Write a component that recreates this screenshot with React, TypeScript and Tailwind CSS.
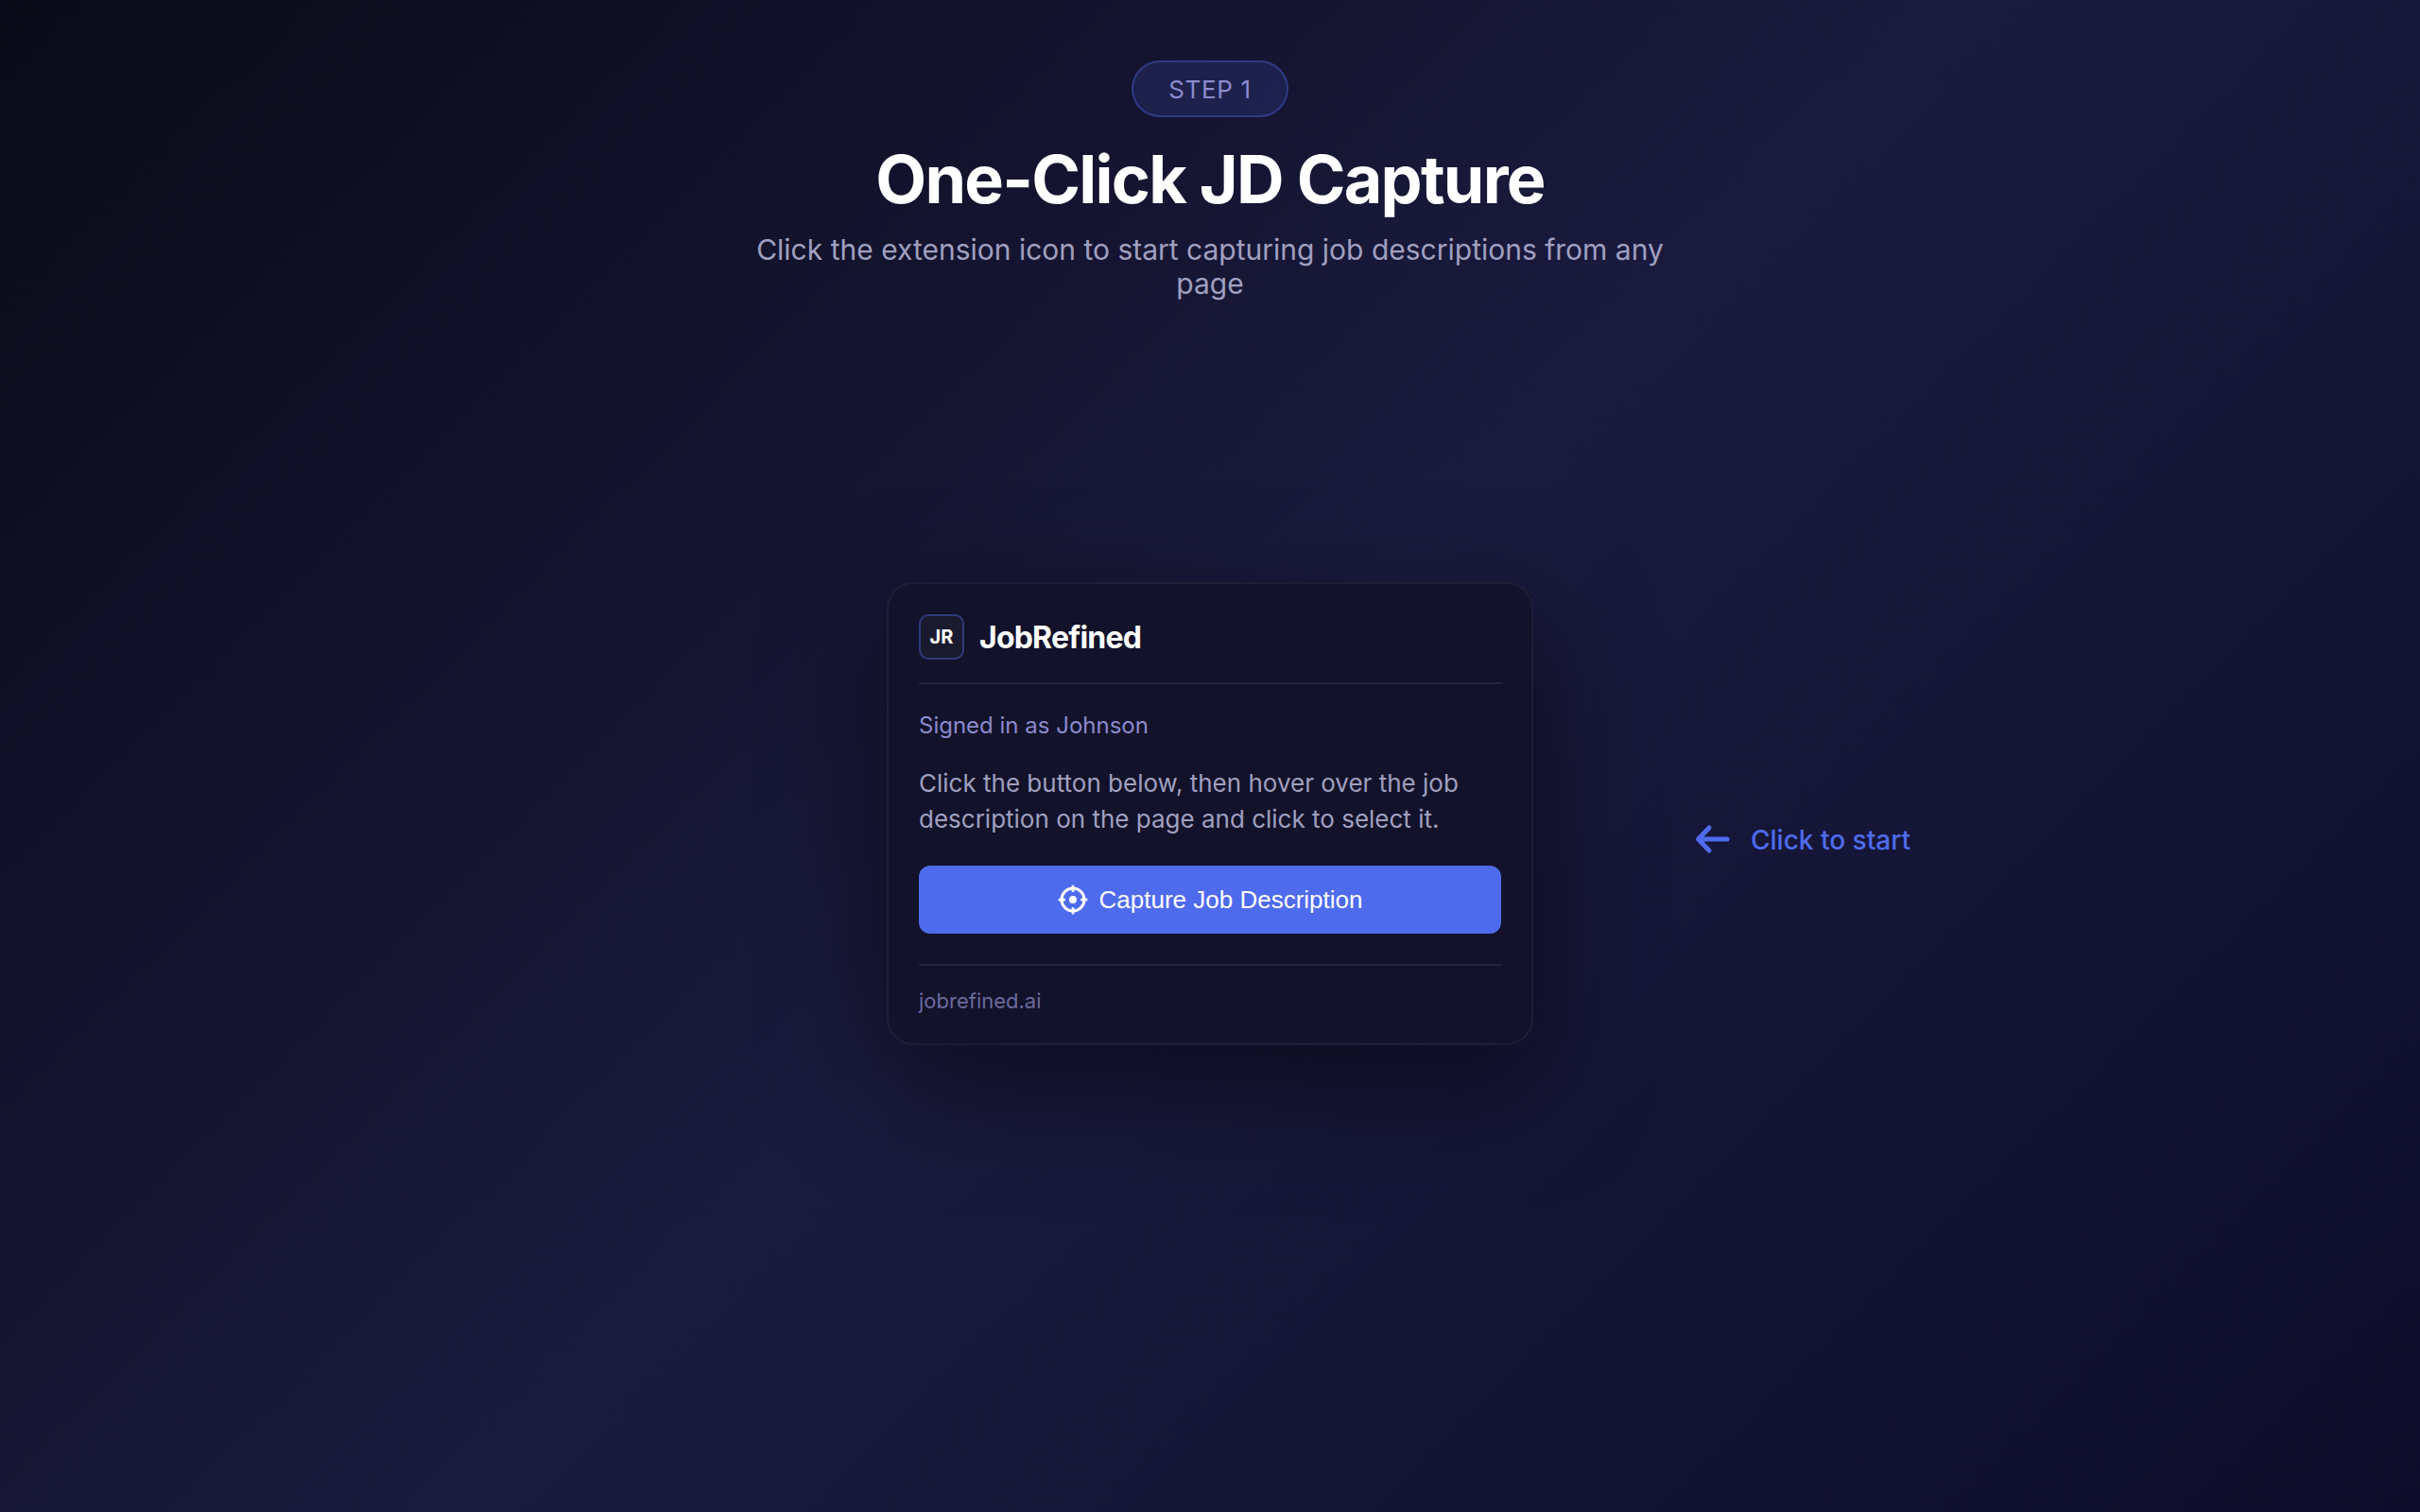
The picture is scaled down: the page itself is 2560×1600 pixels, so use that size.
function TargetIcon() {
  return (
    <svg
      className="size-8"
      viewBox="0 0 32 32"
      fill="none"
      stroke="currentColor"
      strokeWidth="3"
      strokeLinecap="round"
      aria-hidden="true"
    >
      <circle cx="16" cy="16" r="12" />
      <circle cx="16" cy="16" r="4" fill="currentColor" stroke="none" />
      <path d="M16 2v4.5M16 25.5V30M2 16h4.5M25.5 16H30" />
    </svg>
  );
}

function ArrowIcon() {
  return (
    <svg
      className="size-12"
      viewBox="0 0 48 48"
      fill="none"
      stroke="currentColor"
      strokeWidth="5"
      strokeLinecap="round"
      strokeLinejoin="round"
      aria-hidden="true"
    >
      <path d="M39 23H9M20 11L8.5 23L20 35" />
    </svg>
  );
}

function PopupCard() {
  return (
    <section className="w-[684px] rounded-[28px] border-2 border-white/5 bg-[#12122a] p-8 shadow-[0_40px_120px_rgba(0,0,0,0.5)]">
      <div className="flex items-center gap-4 border-b-2 border-white/8 pb-6">
        <div className="flex size-12 items-center justify-center rounded-[10px] border-2 border-[#4f6bed]/40 bg-[#1a1a2e] text-xl font-bold text-white">
          JR
        </div>
        <h2 className="pt-0.5 text-[32px] leading-10 font-bold tracking-tight text-white">JobRefined</h2>
      </div>

      <p className="mt-7 text-2xl leading-8 text-[#8b8bcd]">Signed in as Johnson</p>
      <p className="mt-[26px] text-[26px] leading-[38px] text-[#a0a0c0]">
        Click the button below, then hover over the job description on the page and click to select it.
      </p>

      <button
        type="button"
        className="mt-[30px] flex h-[72px] w-full items-center justify-center gap-3 rounded-xl bg-[#4f6bed] font-['Liberation_Sans',Arial,sans-serif] text-[26px] text-white"
      >
        <TargetIcon />
        Capture Job Description
      </button>

      <div className="mt-8 border-t-2 border-white/8 pt-6">
        <a href="#" className="block text-[22px] leading-[26px] text-[#6b6b9d]">
          jobrefined.ai
        </a>
      </div>
    </section>
  );
}

export default function App() {
  return (
    <div className="flex min-h-screen flex-col items-center bg-[linear-gradient(135deg,#0a0a18_0%,#1a1a3e_50%,#0d0d2b_100%)] pt-16 font-[Inter,sans-serif]">
      <header className="flex flex-col items-center text-center">
        <span className="flex h-[60px] items-center rounded-full border-2 border-[#4f6bed]/35 bg-[#4f6bed]/15 px-[37px] text-[26px] tracking-wide text-[#8b8bcd]">
          STEP 1
        </span>
        <h1 className="mt-[22px] text-[70px] leading-[88px] font-bold tracking-tight text-white">
          One-Click JD Capture
        </h1>
        <p className="mt-3 max-w-[1000px] text-[30px] leading-9 text-[#a0a0c0]">
          Click the extension icon to start capturing job descriptions from any page
        </p>
      </header>

      <main className="mt-[298px] grid w-full grid-cols-[1fr_auto_1fr] items-center">
        <div className="col-start-2">
          <PopupCard />
        </div>
        <div className="flex items-center gap-4 pt-14 pl-[166px] text-[28px] leading-9 font-medium text-[#4f6bed]">
          <ArrowIcon />
          Click to start
        </div>
      </main>
    </div>
  );
}
